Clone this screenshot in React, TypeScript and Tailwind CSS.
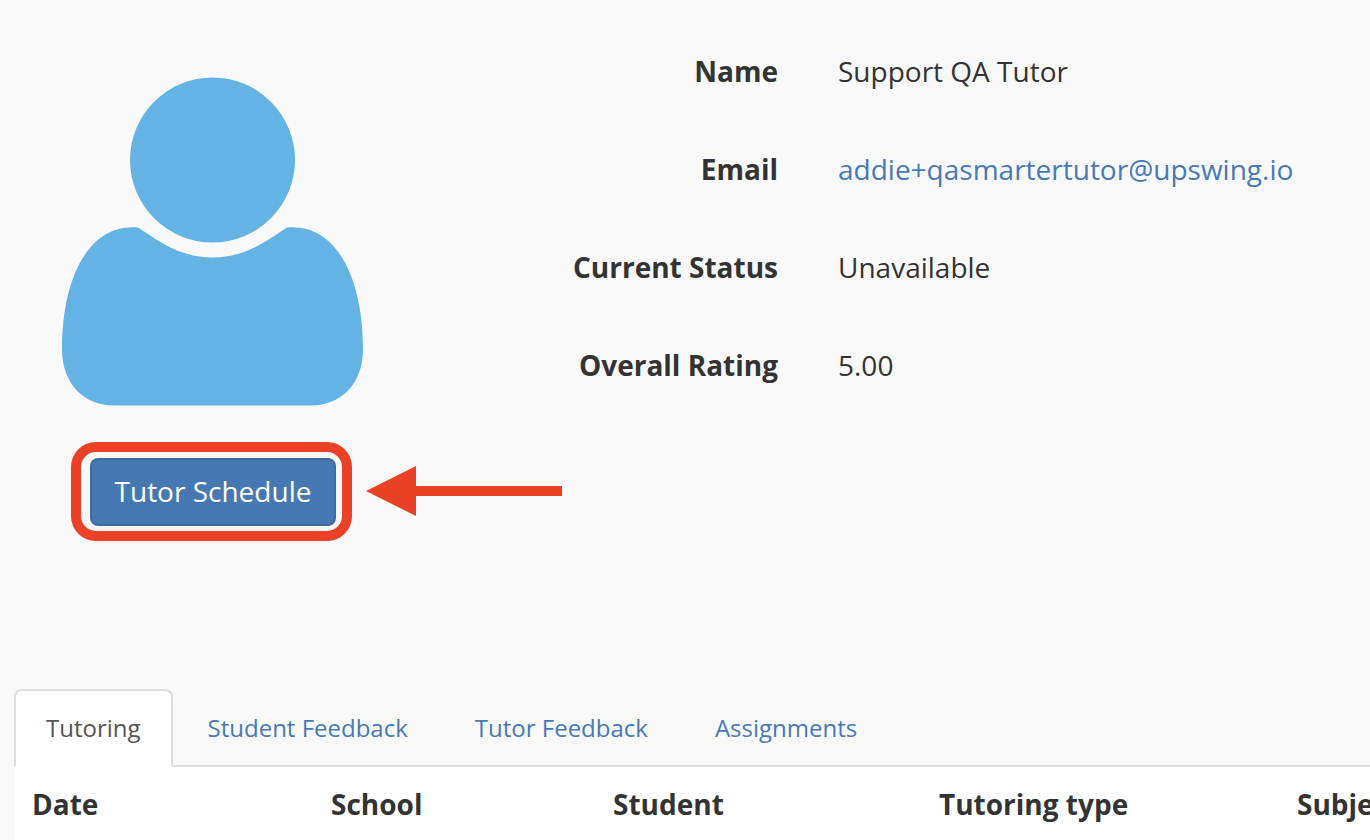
import React from 'react';

const details = [
    { label: 'Name', value: 'Support QA Tutor' },
    { label: 'Email', value: 'addie+qasmartertutor@upswing.io', href: 'mailto:addie+qasmartertutor@upswing.io' },
    { label: 'Current Status', value: 'Unavailable' },
    { label: 'Overall Rating', value: '5.00' },
];

const tabs = ['Tutoring', 'Student Feedback', 'Tutor Feedback', 'Assignments'];

const columns = [
    { title: 'Date', width: 'w-[299px]' },
    { title: 'School', width: 'w-[282px]' },
    { title: 'Student', width: 'w-[326px]' },
    { title: 'Tutoring type', width: 'w-[358px]' },
    { title: 'Subject', width: 'w-[240px]' },
];

function Avatar() {
    return (
        <svg width="302" height="329" viewBox="0 0 302 329" fill="#63b4e4" role="img" aria-label="Tutor avatar">
            <circle cx="150.5" cy="83" r="82.5" />
            <path d="M76 150.5C94 162 116 180.5 150.5 180.5C185 180.5 207 162 225 150.5C276 146 301 204 301 272C301 307 279 328.5 249 328.5H52C22 328.5 0 307 0 272C0 204 25 146 76 150.5Z" />
        </svg>
    );
}

function ScheduleButton() {
    return (
        <div className="relative">
            <button
                type="button"
                className="rounded-lg border-2 border-[#3f6ca3] bg-[#4679b2] px-[23px] pt-[11px] pb-[13px] text-[28px] leading-10 whitespace-nowrap text-white"
            >
                Tutor Schedule
            </button>

            {/* Highlight ring and arrow */}
            <div className="pointer-events-none absolute -top-4 -right-4 -bottom-[15px] -left-[19px] rounded-[25px] border-10 border-[#eb4127]"></div>
            <svg className="absolute top-2 left-full ml-[30px]" width="196" height="50" viewBox="0 0 196 50" fill="#eb4127" aria-hidden="true">
                <path d="M0 25L50 0V20H196V30H50V50Z" />
            </svg>
        </div>
    );
}

export default function App() {
    return (
        <div className="flex min-h-screen flex-col overflow-hidden bg-[#f9f9f9] font-['Open_Sans',sans-serif] text-[28px] leading-10 text-[#333]">
            <section className="flex shrink-0 pb-[163px]">
                <div className="flex w-[426px] shrink-0 flex-col items-center gap-[52px] pt-[77px]">
                    <Avatar />
                    <ScheduleButton />
                </div>

                <dl className="flex flex-1 flex-col gap-[58px] pt-[51px]">
                    {details.map((item) => (
                        <div key={item.label} className="flex gap-[60px]">
                            <dt className="w-[352px] shrink-0 text-right font-bold">{item.label}</dt>
                            <dd className="whitespace-nowrap">
                                {item.href ? (
                                    <a href={item.href} className="text-[#4679b8]">{item.value}</a>
                                ) : (
                                    item.value
                                )}
                            </dd>
                        </div>
                    ))}
                </dl>
            </section>

            <section className="ml-3.5 flex flex-1 flex-col">
                <div role="tablist" className="flex gap-[3px] border-b-2 border-[#ddd] text-2xl leading-[34px]">
                    {tabs.map((tab, index) => (
                        <button
                            key={tab}
                            type="button"
                            role="tab"
                            aria-selected={index === 0}
                            className={
                                index === 0
                                    ? '-mb-0.5 rounded-t-lg border-2 border-[#ddd] border-b-white bg-white px-[30px] py-5 text-[#555]'
                                    : '-mb-0.5 rounded-t-lg border-2 border-transparent px-[30px] py-5 text-[#4679b8]'
                            }
                        >
                            {tab}
                        </button>
                    ))}
                </div>

                <div className="flex-1 overflow-hidden bg-white">
                    <table className="w-[1505px] table-fixed">
                        <thead>
                            <tr>
                                {columns.map((column) => (
                                    <th key={column.title} scope="col" className={`${column.width} px-[18px] pt-[17px] pb-4 text-left font-bold`}>
                                        {column.title}
                                    </th>
                                ))}
                            </tr>
                        </thead>
                    </table>
                </div>
            </section>
        </div>
    );
}
